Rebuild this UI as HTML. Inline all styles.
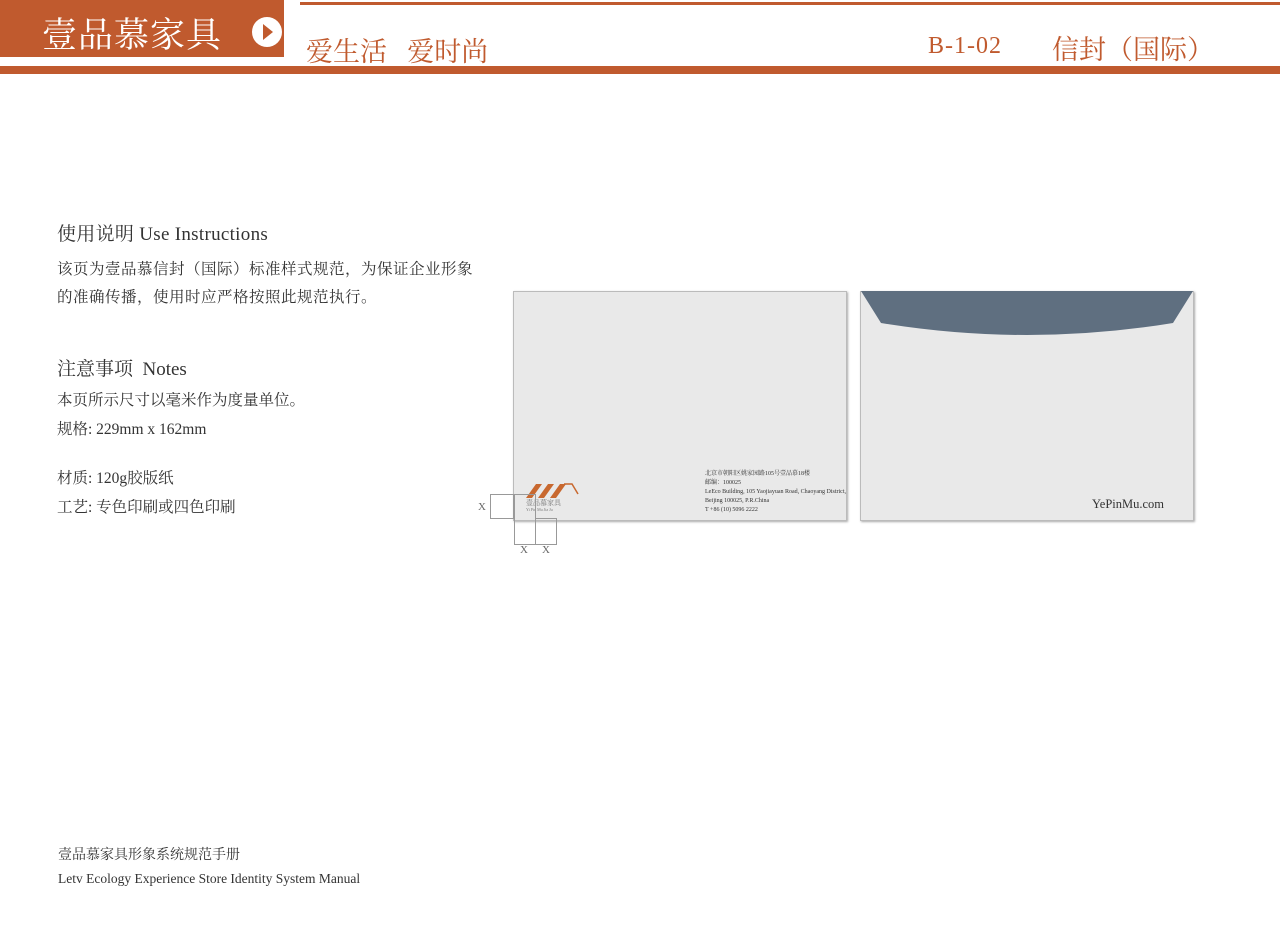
<!DOCTYPE html>
<html><head><meta charset="utf-8"><style>
body{margin:0;width:1280px;height:943px;background:#fff;position:relative;overflow:hidden;font-family:"Liberation Serif","Noto Serif CJK SC",serif;color:#333}
.a{position:absolute}
.or{background:#c05a2e}
</style></head><body>
<div class="a or" style="left:0;top:0;width:284px;height:57px"></div>
<div class="a" style="left:42px;top:8px;font-size:35px;color:#fff;letter-spacing:1px">壹品慕家具</div>
<div class="a" style="left:252px;top:17px;width:30px;height:30px;border-radius:50%;background:#fff"></div>
<div class="a" style="left:263px;top:24px;width:0;height:0;border-left:10px solid #c05a2e;border-top:8px solid transparent;border-bottom:8px solid transparent"></div>
<div class="a or" style="left:300px;top:2px;width:980px;height:3px"></div>
<div class="a or" style="left:0;top:66px;width:1280px;height:8px"></div>
<div class="a" style="left:306px;top:30px;font-size:27px;color:#c05a2e">爱生活&nbsp;&nbsp;&nbsp;爱时尚</div>
<div class="a" style="left:928px;top:33px;font-size:24px;color:#c05a2e;letter-spacing:1px">B-1-02</div>
<div class="a" style="left:1052px;top:28px;font-size:27px;color:#c05a2e">信封（国际）</div>

<div class="a" style="left:57px;top:219px;font-size:19px;letter-spacing:0.3px">使用说明 Use Instructions</div>
<div class="a" style="left:57px;top:256px;font-size:15.5px;line-height:28px;letter-spacing:0.5px">该页为壹品慕信封（国际）标准样式规范，为保证企业形象<br>的准确传播，使用时应严格按照此规范执行。</div>
<div class="a" style="left:57px;top:354px;font-size:19px">注意事项&nbsp; Notes</div>
<div class="a" style="left:57px;top:386px;font-size:15.5px;line-height:29px">本页所示尺寸以毫米作为度量单位。<br>规格: 229mm x 162mm</div>
<div class="a" style="left:57px;top:464px;font-size:15.5px;line-height:29px">材质: 120g胶版纸<br>工艺: 专色印刷或四色印刷</div>

<div class="a" style="left:513px;top:291px;width:332px;height:228px;background:#e9e9e9;border:1px solid #bbb;box-shadow:1px 1px 2px #aaa"></div>
<svg class="a" style="left:520px;top:480px" width="62" height="20"><g fill="#c8682f"><polygon points="6,18 16,4 22,4 12,18"/><polygon points="18,18 28,4 34,4 24,18"/><polygon points="30,18 40,4 46,4 36,18"/><polyline points="44,4 52,4 58,14" fill="none" stroke="#c8682f" stroke-width="1.5"/></g></svg>
<div class="a" style="left:526px;top:498px;font-size:7px;color:#777">壹品慕家具</div>
<div class="a" style="left:526px;top:507px;font-size:4px;color:#777">Yi Pin Mu Jia Ju</div>
<div class="a" style="left:705px;top:470px;font-size:6px;line-height:9px;color:#333">北京市朝阳区姚家园路105号壹品慕18楼<br>邮编：100025<br>LeEco Building, 105 Yaojiayuan Road, Chaoyang District,<br>Beijing 100025, P.R.China<br>T +86 (10) 5096 2222</div>
<div class="a" style="left:490px;top:494px;width:22px;height:23px;border:1px solid #999"></div>
<div class="a" style="left:514px;top:494px;width:20px;height:49px;border:1px solid #999"></div>
<div class="a" style="left:535px;top:518px;width:20px;height:25px;border:1px solid #999"></div>
<div class="a" style="left:478px;top:501px;font-size:11px;color:#666">X</div>
<div class="a" style="left:520px;top:544px;font-size:11px;color:#666">X</div>
<div class="a" style="left:542px;top:544px;font-size:11px;color:#666">X</div>

<div class="a" style="left:860px;top:291px;width:332px;height:228px;background:#e9e9e9;border:1px solid #bbb;box-shadow:1px 1px 2px #aaa"></div>
<svg class="a" style="left:861px;top:291px" width="332" height="50"><path d="M0,0 H332 L312,32 Q166,56 20,32 Z" fill="#5f6f80"/></svg>
<div class="a" style="left:1092px;top:497px;font-size:12.5px;color:#333">YePinMu.com</div>

<div class="a" style="left:58px;top:844px;font-size:14px">壹品慕家具形象系统规范手册</div>
<div class="a" style="left:58px;top:871px;font-size:13.5px">Letv Ecology Experience Store Identity System Manual</div>
</body></html>
